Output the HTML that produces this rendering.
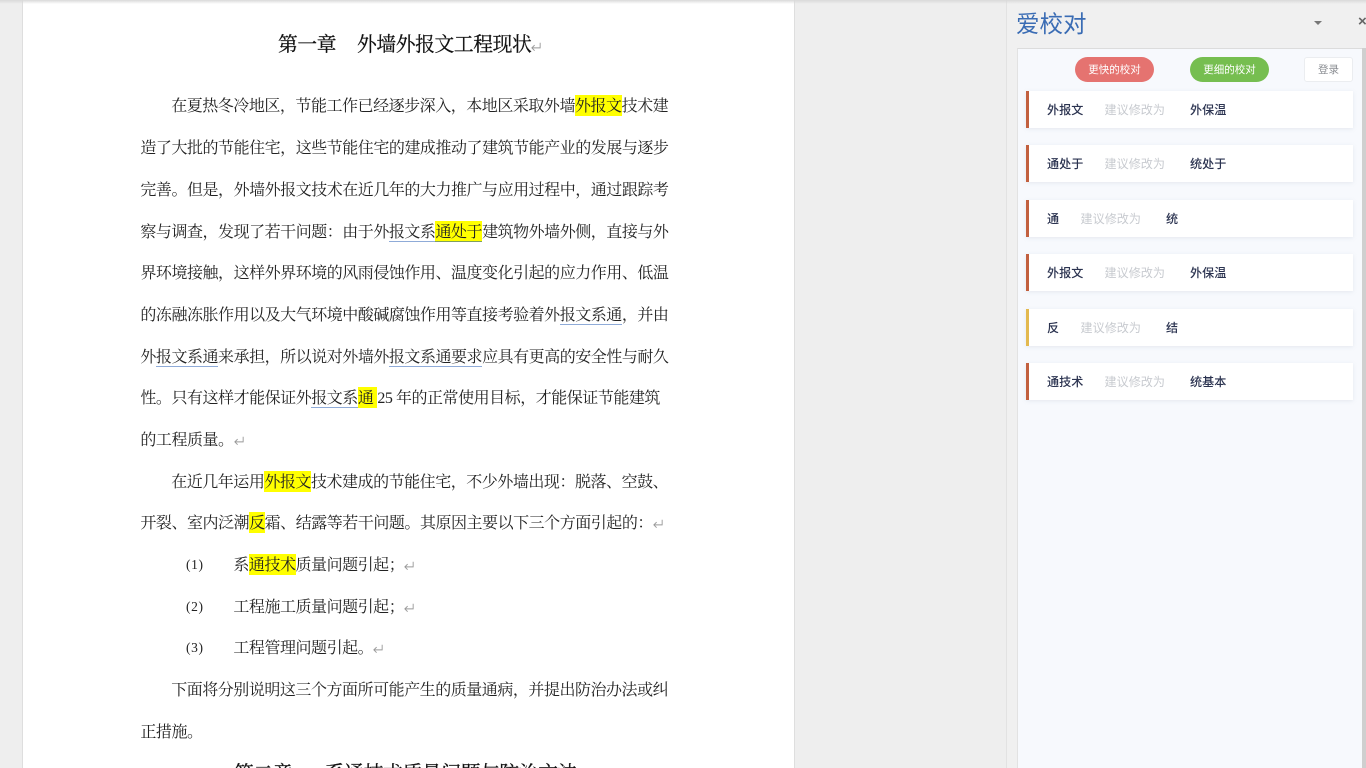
<!DOCTYPE html>
<html lang="zh-CN">
<head>
<meta charset="utf-8">
<title>爱校对</title>
<style>
html,body{margin:0;padding:0;width:1366px;height:768px;overflow:hidden;background:#eeeeee}
*{box-sizing:border-box}
#wrap{position:absolute;left:0;top:0;width:1366px;height:768px;overflow:hidden;contain:paint}
#page{position:absolute;left:23px;top:0;width:771px;height:790px;background:#fff;box-shadow:0 0 0 1px #dedede}
#topshade{position:absolute;left:0;top:0;width:1366px;height:4px;background:linear-gradient(#d9d9d9,rgba(238,238,238,0));z-index:5}
#doc{position:absolute;left:0;top:0;width:800px;height:768px;overflow:hidden;filter:blur(.3px)}
.l{position:absolute;height:22px;line-height:22px;white-space:nowrap;font-family:"Liberation Serif","Noto Serif CJK SC",serif;font-size:16px;letter-spacing:-.47px;color:#222}
.h{background:#ffff00;display:inline-block;height:21px;line-height:22px;vertical-align:top;position:relative;top:-1px}
.h span{position:relative;top:1px}
.u{border-bottom:1px solid #8fabd8;display:inline-block;height:21px;line-height:22px;vertical-align:top;position:relative;top:-1px}
.u span{position:relative;top:1px}
.hu{border-bottom:1px solid #7f9f60}
.r{display:inline-block;width:12px;height:11px;vertical-align:-1px;margin-left:-1px}
.t{font-size:19.8px;letter-spacing:-.4px;color:#111;-webkit-text-stroke:.25px #111}
.n{font-size:13.5px;letter-spacing:.6px}
#side{position:absolute;left:1006px;top:0;width:360px;height:768px;background:#f0f0f0;border-left:1px solid #e2e2e2}
#logo{position:absolute;left:1016px;top:9px;font:23.5px/30px "Liberation Sans","Noto Sans CJK SC",sans-serif;color:#3a6cb4;filter:blur(.3px)}
#tri{position:absolute;left:1314px;top:21px;width:0;height:0;border-left:4px solid transparent;border-right:4px solid transparent;border-top:4px solid #777}
#x{position:absolute;left:1358px;top:13px;font:bold 15px/18px "Liberation Sans",sans-serif;color:#666}
#panel{position:absolute;left:1017px;top:48px;width:349px;height:720px;background:#f7f9fd;border-top:1px solid #dcdcdc;border-left:1px solid #e2e2e2}
#edge{position:absolute;left:1362px;top:48px;width:4px;height:720px;background:#cfcfcf}
.b{position:absolute;top:57px;height:25px;border-radius:13px;color:#fff;font:10.5px/27px "Liberation Sans","Noto Sans CJK SC",sans-serif;text-align:center;filter:blur(.25px)}
.c{position:absolute;left:1026px;width:327px;height:37px;background:#fff;border-left:3.5px solid #c2603f;box-shadow:0 1px 4px rgba(150,160,180,.18);font:12.1px/39px "Liberation Sans","Noto Sans CJK SC",sans-serif}
.c i{position:absolute;top:0;font-style:normal;white-space:nowrap;color:#2b3350;font-weight:500;filter:blur(.2px)}
.c i.g{color:#c8cbd0;font-weight:400}
</style>
</head>
<body>
<div id="wrap">
<div id="page"></div>
<div id="doc">
<div class="l t" style="left:278px;top:34px">第一章</div>
<div class="l t" style="left:357px;top:34px">外墙外报文工程现状<svg class="r" viewBox="0 0 13 11"><path d="M11 1.5V7H2M5 4 2 7l3 3" fill="none" stroke="#999" stroke-width="1"/></svg></div>

<div class="l" style="left:171.2px;top:96px">在夏热冬冷地区，节能工作已经逐步深入，本地区采取外墙<span class="h"><span>外报文</span></span>技术建</div>
<div class="l" style="left:140.4px;top:138px">造了大批的节能住宅，这些节能住宅的建成推动了建筑节能产业的发展与逐步</div>
<div class="l" style="left:140.4px;top:180px">完善。但是，外墙外报文技术在近几年的大力推广与应用过程中，通过跟踪考</div>
<div class="l" style="left:140.4px;top:222px">察与调查，发现了若干问题：由于外<span class="u"><span>报文系</span></span><span class="h hu"><span>通处于</span></span>建筑物外墙外侧，直接与外</div>
<div class="l" style="left:140.4px;top:263px">界环境接触，这样外界环境的风雨侵蚀作用、温度变化引起的应力作用、低温</div>
<div class="l" style="left:140.4px;top:305px">的冻融冻胀作用以及大气环境中酸碱腐蚀作用等直接考验着外<span class="u"><span>报文系通</span></span>，并由</div>
<div class="l" style="left:140.4px;top:347px">外<span class="u"><span>报文系通</span></span>来承担，所以说对外墙外<span class="u"><span>报文系通要求</span></span>应具有更高的安全性与耐久</div>
<div class="l" style="left:140.4px;top:388px">性。只有这样才能保证外<span class="u"><span>报文系</span></span><span class="h" style="padding-right:4px"><span>通</span></span>25 年的正常使用目标，才能保证节能建筑</div>
<div class="l" style="left:140.4px;top:430px">的工程质量。<svg class="r" viewBox="0 0 13 11"><path d="M11 1.5V7H2M5 4 2 7l3 3" fill="none" stroke="#999" stroke-width="1"/></svg></div>
<div class="l" style="left:171.2px;top:472px">在近几年运用<span class="h"><span>外报文</span></span>技术建成的节能住宅，不少外墙出现：脱落、空鼓、</div>
<div class="l" style="left:140.4px;top:513px">开裂、室内泛潮<span class="h"><span>反</span></span>霜、结露等若干问题。其原因主要以下三个方面引起的：<svg class="r" viewBox="0 0 13 11"><path d="M11 1.5V7H2M5 4 2 7l3 3" fill="none" stroke="#999" stroke-width="1"/></svg></div>
<div class="l n" style="left:186px;top:554px">(1)</div>
<div class="l" style="left:233.4px;top:555px">系<span class="h"><span>通技术</span></span>质量问题引起；<svg class="r" viewBox="0 0 13 11"><path d="M11 1.5V7H2M5 4 2 7l3 3" fill="none" stroke="#999" stroke-width="1"/></svg></div>
<div class="l n" style="left:186px;top:596px">(2)</div>
<div class="l" style="left:233.4px;top:597px">工程施工质量问题引起；<svg class="r" viewBox="0 0 13 11"><path d="M11 1.5V7H2M5 4 2 7l3 3" fill="none" stroke="#999" stroke-width="1"/></svg></div>
<div class="l n" style="left:186px;top:637px">(3)</div>
<div class="l" style="left:233.4px;top:638px">工程管理问题引起。<svg class="r" viewBox="0 0 13 11"><path d="M11 1.5V7H2M5 4 2 7l3 3" fill="none" stroke="#999" stroke-width="1"/></svg></div>
<div class="l" style="left:171.2px;top:680px">下面将分别说明这三个方面所可能产生的质量通病，并提出防治办法或纠</div>
<div class="l" style="left:140.4px;top:722px">正措施。</div>
<div class="l t" style="left:234px;top:763px">第二章</div>
<div class="l t" style="left:325px;top:763px">系通技术质量问题与防治方法</div>
</div>

<div id="side"></div>
<div id="logo">爱校对</div>
<div id="tri"></div>
<div id="x">×</div>
<div id="panel"></div>
<div id="edge"></div>
<div class="b" style="left:1075px;width:79px;background:#e57370">更快的校对</div>
<div class="b" style="left:1190px;width:79px;background:#76be50">更细的校对</div>
<div class="b" style="left:1304px;width:49px;background:#fff;border:1px solid #ebedf0;border-radius:3px;color:#8a8d92;line-height:25px">登录</div>

<div class="c" style="top:91px"><i style="left:18px">外报文</i><i class="g" style="left:75.5px">建议修改为</i><i style="left:161px">外保温</i></div>
<div class="c" style="top:145px"><i style="left:18px">通处于</i><i class="g" style="left:75.5px">建议修改为</i><i style="left:161px">统处于</i></div>
<div class="c" style="top:200px"><i style="left:18px">通</i><i class="g" style="left:51.5px">建议修改为</i><i style="left:137px">统</i></div>
<div class="c" style="top:254px"><i style="left:18px">外报文</i><i class="g" style="left:75.5px">建议修改为</i><i style="left:161px">外保温</i></div>
<div class="c" style="top:309px;border-left-color:#e3b94f"><i style="left:18px">反</i><i class="g" style="left:51.5px">建议修改为</i><i style="left:137px">结</i></div>
<div class="c" style="top:363px"><i style="left:18px">通技术</i><i class="g" style="left:75.5px">建议修改为</i><i style="left:161px">统基本</i></div>
<div id="topshade"></div>
</div>
</body>
</html>
